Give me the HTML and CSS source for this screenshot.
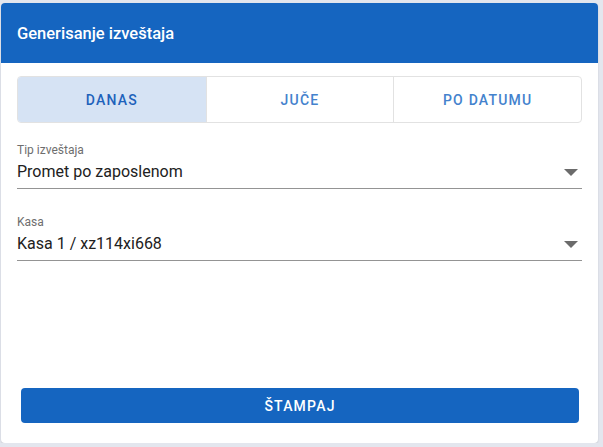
FILE: index.html
```html
<!DOCTYPE html>
<html lang="sr">
<head>
<meta charset="utf-8">
<title>Generisanje izveštaja</title>
<link rel="stylesheet" href="styles.css">
</head>
<body>
<div class="card">
  <div class="card-header">Generisanje izveštaja</div>
  <div class="card-body">
    <div class="tabs">
      <div class="tab active">DANAS</div>
      <div class="tab">JUČE</div>
      <div class="tab">PO DATUMU</div>
    </div>
    <div class="field first">
      <div class="label">Tip izveštaja</div>
      <div class="select">
        <span class="value">Promet po zaposlenom</span>
        <svg class="arrow" width="14" height="7" viewBox="0 0 14 7"><path d="M0 0h14L7 7z" fill="#6b6b6b"/></svg>
      </div>
    </div>
    <div class="field">
      <div class="label">Kasa</div>
      <div class="select">
        <span class="value">Kasa 1 / xz114xi668</span>
        <svg class="arrow" width="14" height="7" viewBox="0 0 14 7"><path d="M0 0h14L7 7z" fill="#6b6b6b"/></svg>
      </div>
    </div>
    <div class="spacer"></div>
    <button class="print">ŠTAMPAJ</button>
  </div>
</div>
</body>
</html>
```
FILE: styles.css
```css
html, body {
  margin: 0;
  padding: 0;
  background: #e3e6ee;
  font-family: Roboto, "Liberation Sans", Arial, sans-serif;
}
body {
  padding: 3px 5px 0 1px;
}
.card {
  width: 597px;
  height: 440px;
  background: #fff;
  border-radius: 4px;
  box-shadow: 0 1px 2px rgba(0,0,0,0.12);
  display: flex;
  flex-direction: column;
  overflow: hidden;
}
.card-header {
  height: 60px;
  background: #1565c0;
  color: #fff;
  font-size: 16.5px;
  font-weight: 500;
  display: flex;
  align-items: center;
  padding: 0 16px;
  box-sizing: border-box;
}
.card-body {
  flex: 1;
  display: flex;
  flex-direction: column;
  padding: 13px 16px 20px 16px;
}
.tabs {
  display: grid;
  grid-template-columns: 1fr 1fr 1fr;
  height: 47px;
  border: 1px solid #e2e2e2;
  border-radius: 4px;
  box-sizing: border-box;
  overflow: hidden;
}
.tab {
  display: flex;
  align-items: center;
  justify-content: center;
  font-size: 14px;
  font-weight: 500;
  letter-spacing: 1.2px;
  color: #4482cd;
}
.tab + .tab {
  border-left: 1px solid #e2e2e2;
}
.tab.active {
  background: #d6e3f4;
  color: #1e62bb;
}
.field {
  margin-top: 26px;
}
.field.first {
  margin-top: 20px;
}
.label {
  font-size: 12px;
  color: #6e6e6e;
  line-height: 14px;
}
.select {
  display: flex;
  align-items: center;
  justify-content: space-between;
  height: 31px;
  border-bottom: 1px solid #949494;
  padding-right: 4px;
}
.value {
  font-size: 16px;
  color: #212121;
  padding-bottom: 3px;
}
.arrow {
  display: block;
  margin-bottom: 1px;
}
.spacer {
  flex: 1;
}
.print {
  margin: 0 3px 0 4px;
  height: 35px;
  border: none;
  border-radius: 4px;
  background: #1565c0;
  color: #fff;
  font-family: Roboto, "Liberation Sans", Arial, sans-serif;
  font-size: 14px;
  font-weight: 500;
  letter-spacing: 1.2px;
}
```
